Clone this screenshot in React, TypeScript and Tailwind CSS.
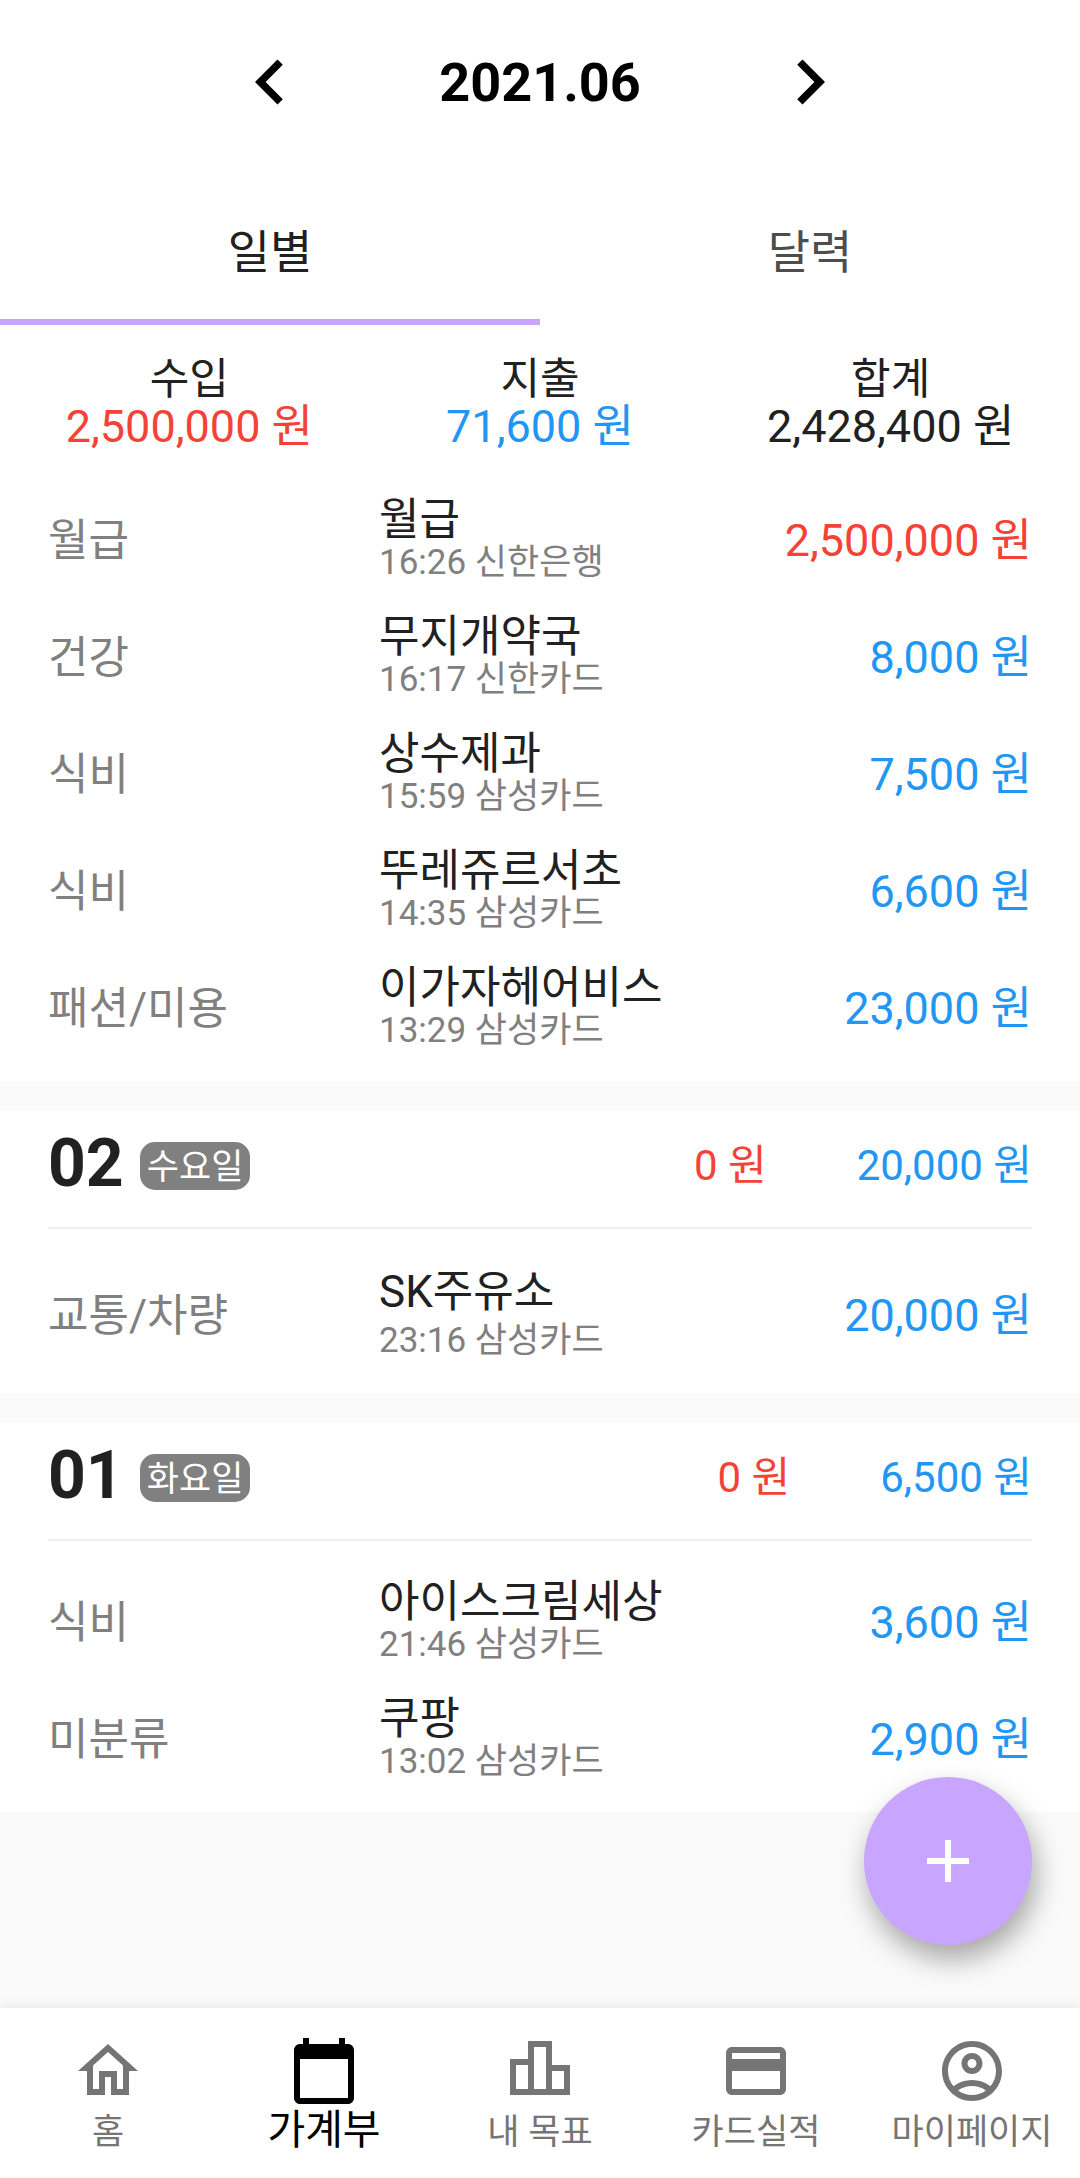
import { useState } from "react";
import {
  MdAdd,
  MdCalendarToday,
  MdChevronLeft,
  MdChevronRight,
  MdOutlineAccountCircle,
} from "react-icons/md";

type Entry = {
  category: string;
  title: string;
  time: string;
  source: string;
  amount: string;
  income?: boolean;
  roomy?: boolean;
};

type Day = {
  date: string;
  weekday: string;
  income: string;
  expense: string;
  entries: Entry[];
};

const latest: Entry[] = [
  { category: "월급", title: "월급", time: "16:26", source: "신한은행", amount: "2,500,000", income: true },
  { category: "건강", title: "무지개약국", time: "16:17", source: "신한카드", amount: "8,000" },
  { category: "식비", title: "상수제과", time: "15:59", source: "삼성카드", amount: "7,500" },
  { category: "식비", title: "뚜레쥬르서초", time: "14:35", source: "삼성카드", amount: "6,600" },
  { category: "패션/미용", title: "이가자헤어비스", time: "13:29", source: "삼성카드", amount: "23,000" },
];

const days: Day[] = [
  {
    date: "02",
    weekday: "수요일",
    income: "0",
    expense: "20,000",
    entries: [
      { category: "교통/차량", title: "SK주유소", time: "23:16", source: "삼성카드", amount: "20,000", roomy: true },
    ],
  },
  {
    date: "01",
    weekday: "화요일",
    income: "0",
    expense: "6,500",
    entries: [
      { category: "식비", title: "아이스크림세상", time: "21:46", source: "삼성카드", amount: "3,600" },
      { category: "미분류", title: "쿠팡", time: "13:02", source: "삼성카드", amount: "2,900" },
    ],
  },
];

function HomeIcon() {
  return (
    <svg viewBox="0 0 24 24" className="size-[72px]" fill="currentColor" aria-hidden="true">
      <path d="M12 5.69l5 4.5V18h-2v-6H9v6H7v-7.81l5-4.5M12 3L2 12h3v8h6v-6h2v6h6v-8h3L12 3z" />
    </svg>
  );
}

function GoalIcon() {
  return (
    <svg viewBox="0 0 24 24" className="size-[72px]" fill="currentColor" aria-hidden="true">
      <path d="M16 10V2H8v6H2v12h20V10h-6zm-6-6h4v14h-4V4zM4 10h4v8H4v-8zm16 8h-4v-6h4v6z" />
    </svg>
  );
}

function CardIcon() {
  return (
    <svg viewBox="0 0 24 24" className="size-[72px]" fill="currentColor" aria-hidden="true">
      <path d="M20 4H4c-1.11 0-1.99.89-1.99 2L2 18c0 1.11.89 2 2 2h16c1.11 0 2-.89 2-2V6c0-1.11-.89-2-2-2zm0 14H4v-6h16v6zm0-10H4V6h16v2z" />
    </svg>
  );
}

const navItems = [
  { label: "홈", icon: <HomeIcon /> },
  { label: "가계부", icon: <MdCalendarToday className="size-[72px]" />, active: true },
  { label: "내 목표", icon: <GoalIcon /> },
  { label: "카드실적", icon: <CardIcon /> },
  { label: "마이페이지", icon: <MdOutlineAccountCircle className="size-[72px]" /> },
];

function EntryRow({ entry }: { entry: Entry }) {
  return (
    <li className={`grid grid-cols-3 items-center ${entry.roomy ? "h-[127px]" : "h-[117px]"}`}>
      <span className="whitespace-nowrap text-[44px] leading-[48px] text-[#808080]">{entry.category}</span>
      <div className="whitespace-nowrap pl-[3px]">
        <p className={`text-[44px] ${entry.roomy ? "leading-[50px]" : "leading-[44px]"}`}>{entry.title}</p>
        <p className={`text-[35px] text-[#808080] ${entry.roomy ? "leading-[48px]" : "leading-[42px]"}`}>
          {entry.time} {entry.source}
        </p>
      </div>
      <span
        className={`whitespace-nowrap text-right text-[45px] leading-[48px] ${
          entry.income ? "text-[#f44336]" : "text-[#2196f3]"
        }`}
      >
        {entry.amount} 원
      </span>
    </li>
  );
}

function Summary({ label, value, tone }: { label: string; value: string; tone: string }) {
  return (
    <div className="whitespace-nowrap text-center">
      <dt className="text-[43px] leading-[48px]">{label}</dt>
      <dd className={`text-[45px] leading-[48px] ${tone}`}>{value} 원</dd>
    </div>
  );
}

function DaySection({ day }: { day: Day }) {
  return (
    <section className="bg-white px-12 pb-[14px]">
      <header className="flex h-[118px] items-center border-b-2 border-[#eeeeee] pb-[6px]">
        <h2 className="pb-1 text-[66px] leading-[76px] font-bold">{day.date}</h2>
        <span className="ml-4 h-12 rounded-[15px] bg-[#808080] px-[7px] pt-[2px] text-[35px] leading-[48px] text-white">
          {day.weekday}
        </span>
        <span className="ml-auto text-[42px] leading-[48px] text-[#f44336]">{day.income} 원</span>
        <span className="ml-[90px] text-[42px] leading-[48px] text-[#2196f3]">{day.expense} 원</span>
      </header>
      <ul className="pt-[23px]">
        {day.entries.map((entry) => (
          <EntryRow key={entry.time} entry={entry} />
        ))}
      </ul>
    </section>
  );
}

export default function App() {
  const [tab, setTab] = useState("일별");

  return (
    <div className="flex min-h-screen flex-col bg-[#fafafa] font-[Roboto,'Noto_Sans_CJK_KR',sans-serif] text-[#212121]">
      <div className="bg-white">
        <header className="flex h-[164px] items-center justify-center text-black">
          <button type="button" aria-label="이전 달">
            <MdChevronLeft className="size-[90px]" />
          </button>
          <h1 className="w-[450px] pt-[2px] text-center text-[54px] leading-[64px] font-bold">2021.06</h1>
          <button type="button" aria-label="다음 달">
            <MdChevronRight className="size-[90px]" />
          </button>
        </header>
        <div role="tablist" className="mt-4 grid grid-cols-2">
          {["일별", "달력"].map((name) => (
            <button
              key={name}
              type="button"
              role="tab"
              aria-selected={tab === name}
              onClick={() => setTab(name)}
              className={`h-[145px] border-b-[6px] pt-1 text-[46px] leading-[56px] ${
                tab === name ? "border-[#c8a5ff]" : "border-transparent text-[#4d4d4d]"
              }`}
            >
              {name}
            </button>
          ))}
        </div>
      </div>

      <main className="flex flex-1 flex-col gap-[30px]">
        <section className="bg-white pb-[14px]">
          <dl className="grid grid-cols-3 px-[14px] pt-[30px] pb-[31px]">
            <Summary label="수입" value="2,500,000" tone="text-[#f44336]" />
            <Summary label="지출" value="71,600" tone="text-[#2196f3]" />
            <Summary label="합계" value="2,428,400" tone="text-[#212121]" />
          </dl>
          <ul className="px-12">
            {latest.map((entry) => (
              <EntryRow key={entry.time} entry={entry} />
            ))}
          </ul>
        </section>
        {days.map((day) => (
          <DaySection key={day.date} day={day} />
        ))}
      </main>

      <footer className="sticky bottom-0">
        <button
          type="button"
          aria-label="내역 추가"
          className="absolute -top-[231px] right-12 grid size-[168px] place-items-center rounded-full bg-[#c8a5ff] text-white shadow-[4px_14px_28px_rgba(0,0,0,0.34)]"
        >
          <MdAdd className="size-[72px]" />
        </button>
        <nav className="grid h-[170px] grid-cols-5 bg-white pt-[27px] shadow-[0_0_12px_rgba(0,0,0,0.10)]">
          {navItems.map((item) => (
            <a
              key={item.label}
              href="#"
              aria-current={item.active ? "page" : undefined}
              className={`flex flex-col items-center whitespace-nowrap ${
                item.active ? "text-[41px] leading-[46px] text-black" : "text-[35px] leading-[51px] text-[#757575]"
              }`}
            >
              {item.icon}
              {item.label}
            </a>
          ))}
        </nav>
      </footer>
    </div>
  );
}
